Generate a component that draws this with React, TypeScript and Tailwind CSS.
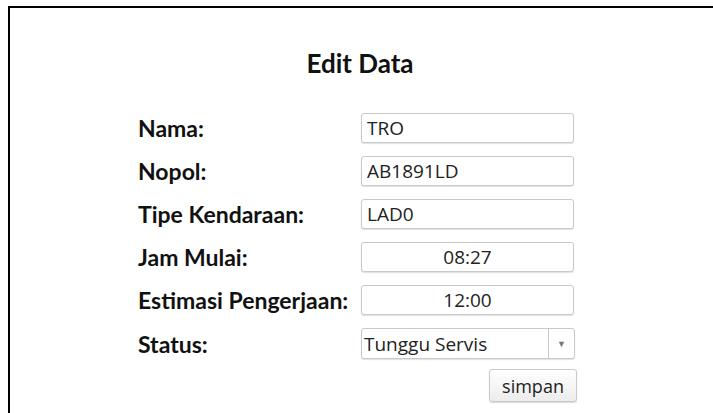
import React from 'react'

const FIELDS = [
  { label: 'Nama:', value: 'TRO', center: false },
  { label: 'Nopol:', value: 'AB1891LD', center: false },
  { label: 'Tipe Kendaraan:', value: 'LAD0', center: false },
  { label: 'Jam Mulai:', value: '08:27', center: true },
  { label: 'Estimasi Pengerjaan:', value: '12:00', center: true },
]

const labelCls = 'w-[223px] text-[23px] font-bold leading-[30px] text-[#111]'

const inputCls =
  'h-[30px] w-[213px] rounded-[3px] border border-[#c9c9c9] bg-white px-[5px] text-[19px] leading-[28px] text-[#222] shadow-[0_1px_1px_rgba(0,0,0,0.12)] outline-none'

export default function App() {
  return (
    <div className="h-screen w-full overflow-hidden bg-white pl-2 pt-1.5">
      <div className="h-[460px] w-[740px] border-[2.5px] border-black">
        {/* Title */}
        <div className="w-[700px] pt-[40px] text-center">
          <h2
            className="text-[26px] font-bold leading-[30px] text-[#111]"
            style={{ fontFamily: 'Lato, sans-serif' }}
          >
            Edit Data
          </h2>
        </div>

        {/* Form */}
        <form className="mt-[35px] flex flex-col gap-[13px] pl-[128px]" onSubmit={e => e.preventDefault()}>
          {FIELDS.map(f => (
            <div key={f.label} className="flex h-[30px] items-center">
              <label className={labelCls} style={{ fontFamily: 'Lato, sans-serif' }}>
                {f.label}
              </label>
              <input
                readOnly
                value={f.value}
                className={`${inputCls} ${f.center ? 'text-center' : 'text-left'}`}
                style={{ fontFamily: '"Open Sans", sans-serif' }}
              />
            </div>
          ))}

          {/* Status select */}
          <div className="flex h-[31px] items-center">
            <label className={labelCls} style={{ fontFamily: 'Lato, sans-serif' }}>
              Status:
            </label>
            <div
              className="flex h-[31px] w-[214px] items-stretch rounded-[3px] border border-[#c9c9c9] bg-white text-[19px] leading-[28px] text-[#222] shadow-[0_1px_1px_rgba(0,0,0,0.12)]"
              style={{ fontFamily: '"Open Sans", sans-serif' }}
            >
              <span className="flex flex-1 items-center pl-[2px]">Tunggu Servis</span>
              <span className="flex w-[26px] items-center justify-center border-l border-[#c9c9c9]">
                <span className="text-[9px] leading-none text-[#777]">▼</span>
              </span>
            </div>
          </div>

          <div className="-mt-[3px] flex w-[439px] justify-end">
            <button
              type="submit"
              className="h-[33px] w-[88px] rounded-[3px] border border-[#c9c9c9] bg-gradient-to-b from-white to-[#ececec] text-[18px] leading-[28px] text-[#222] shadow-[0_1px_1px_rgba(0,0,0,0.15)]"
              style={{ fontFamily: '"Open Sans", sans-serif' }}
            >
              simpan
            </button>
          </div>
        </form>
      </div>
    </div>
  )
}
